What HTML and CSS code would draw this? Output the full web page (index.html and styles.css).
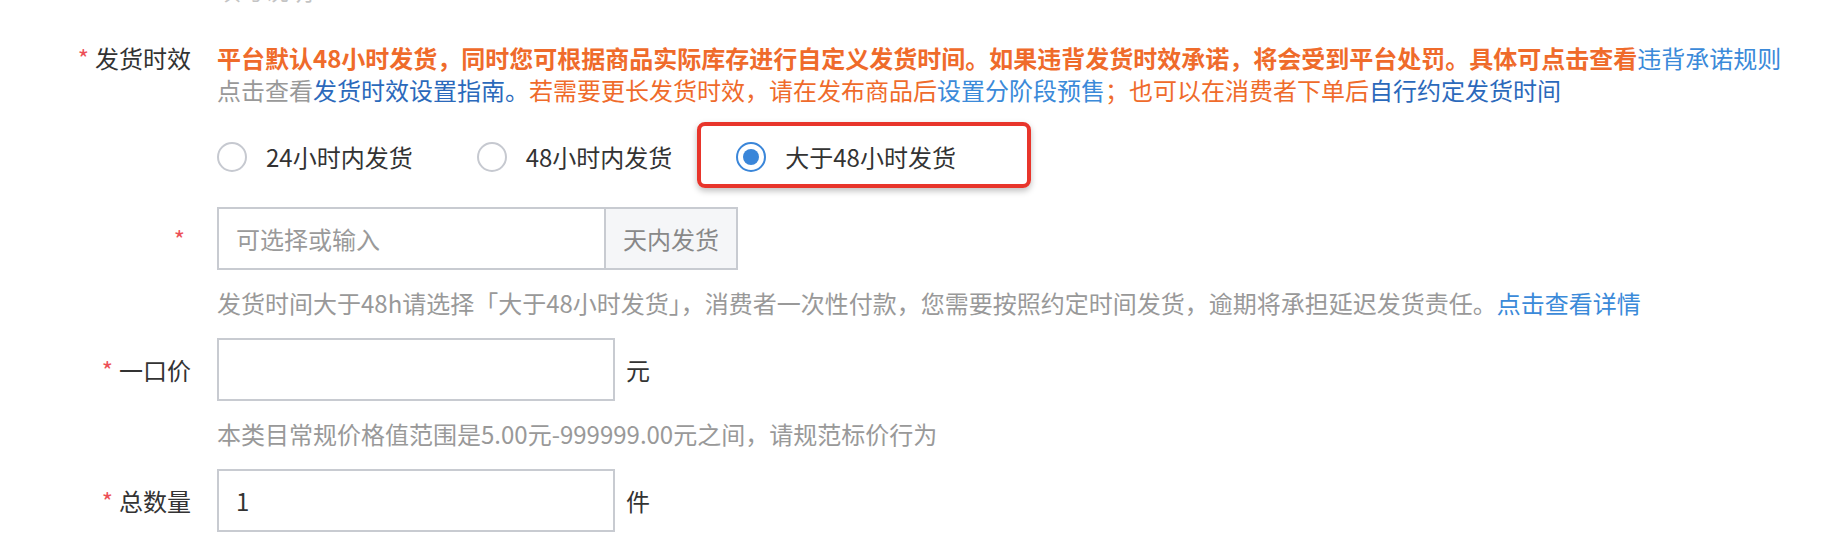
FILE: index.html
```html
<!DOCTYPE html>
<html lang="zh-CN">
<head>
    <meta charset="UTF-8">
    <meta name="viewport" content="width=device-width, initial-scale=1.0">
    <title>发布商品</title>
    <link rel="stylesheet" href="styles.css">
</head>
<body>

    <div class="form">
        <!-- 上一项的提示文字，只露出底部 -->
        <div class="prev-hint">填写说明</div>

        <div class="form-row first-row">
            <div class="form-label"><span class="required">*</span>发货时效</div>
            <div class="form-content">
                <p class="notice">
                    <strong class="warn">平台默认48小时发货，同时您可根据商品实际库存进行自定义发货时间。如果违背发货时效承诺，将会受到平台处罚。具体可点击查看</strong><a class="link" href="#">违背承诺规则</a>
                </p>
                <p class="notice">
                    <span class="muted">点击查看</span><a class="link dark" href="#">发货时效设置指南。</a><span class="orange">若需要更长发货时效，请在发布商品后</span><a class="link" href="#">设置分阶段预售</a><span class="orange">；也可以在消费者下单后</span><a class="link dark" href="#">自行约定发货时间</a>
                </p>

                <div class="radio-group">
                    <label class="radio"><span class="radio-dot"></span>24小时内发货</label>
                    <label class="radio"><span class="radio-dot"></span>48小时内发货</label>
                    <label class="radio checked marked"><span class="radio-dot"></span>大于48小时发货</label>
                </div>
            </div>
        </div>

        <div class="form-row row-input">
            <div class="form-label"><span class="required">*</span></div>
            <div class="form-content">
                <div class="input-group">
                    <input class="text-input days-input" type="text" placeholder="可选择或输入">
                    <span class="addon">天内发货</span>
                </div>
                <p class="help">发货时间大于48h请选择「大于48小时发货」，消费者一次性付款，您需要按照约定时间发货，逾期将承担延迟发货责任。<a class="link" href="#">点击查看详情</a></p>
            </div>
        </div>

        <div class="form-row row-input">
            <div class="form-label"><span class="required">*</span>一口价</div>
            <div class="form-content">
                <div class="input-line">
                    <input class="text-input" type="text">
                    <span class="unit">元</span>
                </div>
                <p class="help">本类目常规价格值范围是5.00元-999999.00元之间，请规范标价行为</p>
            </div>
        </div>

        <div class="form-row row-input">
            <div class="form-label"><span class="required">*</span>总数量</div>
            <div class="form-content">
                <div class="input-line">
                    <input class="text-input" type="text" value="1">
                    <span class="unit">件</span>
                </div>
            </div>
        </div>
    </div>

</body>
</html>
```

FILE: styles.css
```css
body {
    margin: 0;
    padding: 0;
    background-color: #fff;
    font-family: "Noto Sans CJK SC", "Noto Sans", sans-serif;
    font-size: 24px;
    color: #333;
    overflow: hidden;
}
p {
    margin: 0;
}
a {
    text-decoration: none;
}
.prev-hint {
    margin: -26px 0 0 217px;
    line-height: 32px;
    height: 32px;
    color: #c4c4c4;
}
.form-row {
    display: flex;
}
.first-row {
    margin-top: 36px;
}
.form-label {
    width: 191px;
    flex: 0 0 auto;
    margin-right: 26px;
    text-align: right;
    line-height: 32px;
    color: #333;
}
.row-input .form-label {
    line-height: 63px;
}
.required {
    color: #ec4f57;
    margin-right: 6px;
}
.form-content {
    flex: 1;
}
.notice {
    line-height: 32px;
    white-space: nowrap;
}
.warn {
    color: #ef6b2b;
    font-weight: bold;
}
.orange {
    color: #ef6b2b;
}
.muted {
    color: #999;
}
.link {
    color: #3b8ad9;
}
.link.dark {
    color: #2b69bb;
}

/* 单选 */
.radio-group {
    display: flex;
    align-items: center;
    margin-top: 36px;
    height: 30px;
}
.radio {
    display: flex;
    align-items: center;
    margin-right: 64px;
    line-height: 30px;
    color: #333;
    position: relative;
    cursor: pointer;
}
.radio-dot {
    width: 30px;
    height: 30px;
    box-sizing: border-box;
    border: 2px solid #c6c9d0;
    border-radius: 50%;
    margin-right: 19px;
    display: flex;
    align-items: center;
    justify-content: center;
    background-color: #fff;
}
.radio.checked .radio-dot {
    border-color: #3a86d9;
}
.radio.checked .radio-dot::after {
    content: "";
    width: 16px;
    height: 16px;
    border-radius: 50%;
    background-color: #3a86d9;
}
/* 截图里的红色标注框 */
.radio.marked::before {
    content: "";
    position: absolute;
    left: -39px;
    right: -75px;
    top: -20px;
    bottom: -16px;
    border: 4px solid #e8352b;
    border-radius: 8px;
    box-shadow: 0 3px 6px rgba(0, 0, 0, 0.25);
    pointer-events: none;
}

/* 输入框 */
.row-input {
    margin-top: 35px;
}
.row-input + .row-input {
    margin-top: 19px;
}
.input-group,
.input-line {
    display: flex;
    align-items: center;
}
.text-input {
    width: 398px;
    height: 63px;
    box-sizing: border-box;
    border: 2px solid #c8cbd1;
    border-radius: 0;
    padding: 0 17px;
    font-family: inherit;
    font-size: 24px;
    color: #333;
    outline: none;
    background-color: #fff;
}
.text-input::placeholder {
    color: #9a9a9a;
}
.days-input {
    width: 389px;
}
.addon {
    height: 63px;
    box-sizing: border-box;
    border: 2px solid #c8cbd1;
    border-left: none;
    background-color: #f5f6f8;
    padding: 0 17px;
    line-height: 59px;
    color: #888;
}
.unit {
    margin-left: 11px;
    color: #333;
}
.help {
    margin-top: 17px;
    line-height: 32px;
    color: #999;
    white-space: nowrap;
}
```
